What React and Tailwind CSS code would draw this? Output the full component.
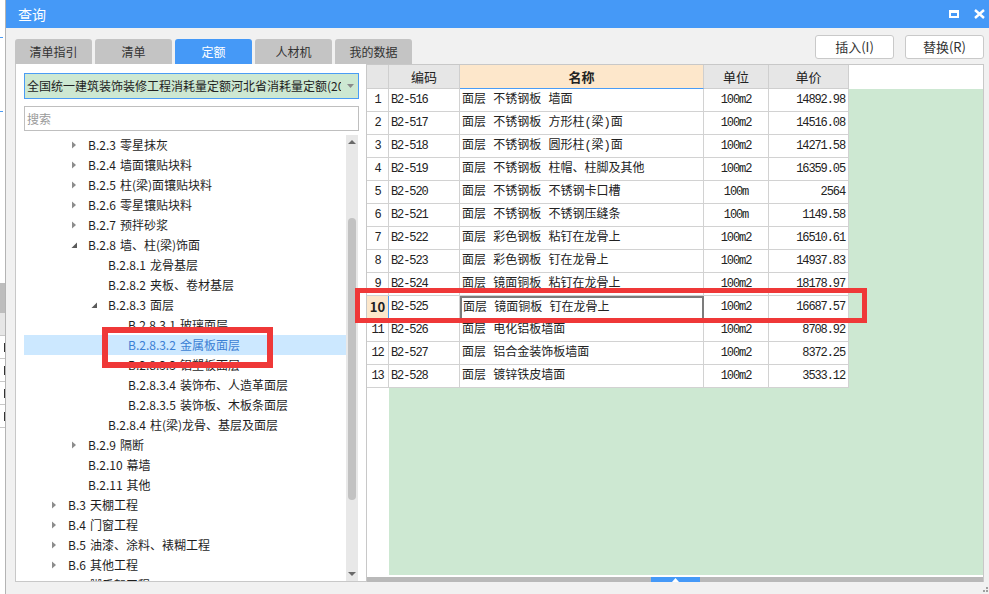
import { useState } from 'react'

const tabs = ['清单指引', '清单', '定额', '人材机', '我的数据']

const tree = [
  { l: 2, t: 'B.2.3 零星抹灰', a: 'r' },
  { l: 2, t: 'B.2.4 墙面镶贴块料', a: 'r' },
  { l: 2, t: 'B.2.5 柱(梁)面镶贴块料', a: 'r' },
  { l: 2, t: 'B.2.6 零星镶贴块料', a: 'r' },
  { l: 2, t: 'B.2.7 预拌砂浆', a: 'r' },
  { l: 2, t: 'B.2.8 墙、柱(梁)饰面', a: 'd' },
  { l: 3, t: 'B.2.8.1 龙骨基层' },
  { l: 3, t: 'B.2.8.2 夹板、卷材基层' },
  { l: 3, t: 'B.2.8.3 面层', a: 'd' },
  { l: 4, t: 'B.2.8.3.1 玻璃面层' },
  { l: 4, t: 'B.2.8.3.2 金属板面层', sel: true },
  { l: 4, t: 'B.2.8.3.3 铝塑板面层' },
  { l: 4, t: 'B.2.8.3.4 装饰布、人造革面层' },
  { l: 4, t: 'B.2.8.3.5 装饰板、木板条面层' },
  { l: 3, t: 'B.2.8.4 柱(梁)龙骨、基层及面层' },
  { l: 2, t: 'B.2.9 隔断', a: 'r' },
  { l: 2, t: 'B.2.10 幕墙' },
  { l: 2, t: 'B.2.11 其他' },
  { l: 1, t: 'B.3 天棚工程', a: 'r' },
  { l: 1, t: 'B.4 门窗工程', a: 'r' },
  { l: 1, t: 'B.5 油漆、涂料、裱糊工程', a: 'r' },
  { l: 1, t: 'B.6 其他工程', a: 'r' },
  { l: 1, t: 'B.7 脚手架工程', a: 'r' },
]

const rows = [
  ['B2-516', '面层 不锈钢板 墙面', '100m2', '14892.98'],
  ['B2-517', '面层 不锈钢板 方形柱(梁)面', '100m2', '14516.08'],
  ['B2-518', '面层 不锈钢板 圆形柱(梁)面', '100m2', '14271.58'],
  ['B2-519', '面层 不锈钢板 柱帽、柱脚及其他', '100m2', '16359.05'],
  ['B2-520', '面层 不锈钢板 不锈钢卡口槽', '100m', '2564'],
  ['B2-521', '面层 不锈钢板 不锈钢压缝条', '100m', '1149.58'],
  ['B2-522', '面层 彩色钢板 粘钉在龙骨上', '100m2', '16510.61'],
  ['B2-523', '面层 彩色钢板 钉在龙骨上', '100m2', '14937.83'],
  ['B2-524', '面层 镜面铜板 粘钉在龙骨上', '100m2', '18178.97'],
  ['B2-525', '面层 镜面铜板 钉在龙骨上', '100m2', '16687.57'],
  ['B2-526', '面层 电化铝板墙面', '100m2', '8708.92'],
  ['B2-527', '面层 铝合金装饰板墙面', '100m2', '8372.25'],
  ['B2-528', '面层 镀锌铁皮墙面', '100m2', '3533.12'],
]

const pad = ['pl-[0px]', 'pl-[0px]', 'pl-[20px]', 'pl-[40px]', 'pl-[60px]']

// tree expand / collapse arrows
const Arrow = ({ type }) => {
  if (type === 'r') {
    return (
      <svg width="6" height="8" viewBox="0 0 6 8" className="shrink-0">
        <path d="M1 0.5 L5 4 L1 7.5 Z" fill="#8c8c8c" />
      </svg>
    )
  }
  if (type === 'd') {
    return (
      <svg width="6" height="8" viewBox="0 0 6 8" className="shrink-0">
        <path d="M6 1.5 L6 7 L0.5 7 Z" fill="#5a5a5a" />
      </svg>
    )
  }
  return <span className="w-[6px] shrink-0" />
}

const App = () => {
  const [active] = useState(2)
  const mono = "font-['Liberation_Mono','Noto_Sans_CJK_SC',monospace]"
  const num = `text-[12px] tracking-[-1.1px] ${mono}`

  return (
    <div className="relative w-[989px] h-[594px] flex overflow-hidden bg-white font-['Noto_Sans_CJK_SC','Noto_Sans',sans-serif] text-[#222]">
      {/* window behind the dialog */}
      <div className="w-[5px] flex flex-col bg-white shrink-0">
        <div className="h-[37px]" />
        <div className="h-[1px] w-[3px] bg-[#4a9cf5]" />
        <div className="h-[73px]" />
        <div className="h-[1px] w-[3px] bg-[#4a9cf5]" />
        <div className="h-[171px]" />
        <div className="h-[30px] bg-[#bdbdbd]" />
        <div className="h-[23px] bg-[#e6e6e6] border-b border-[#c8c8c8]" />
        {[0, 1, 2, 3].map((i) => (
          <div key={i} className="h-[23px] border-b border-[#c8c8c8] flex justify-end items-center overflow-hidden">
            <div className="w-[2px] h-[9px] border-r-[1.5px] border-[#333]" />
          </div>
        ))}
      </div>

      {/* dialog */}
      <div className="flex-1 flex flex-col border-l border-[#b4b4b4] bg-[#f1f1f1]">
        {/* title bar */}
        <div className="h-[28px] bg-[#4599f7] flex items-center pl-[12px] pr-[4px] shrink-0">
          <span className="text-white text-[14px] leading-[28px]">查询</span>
          <div className="ml-auto flex items-center gap-[15px]">
            <div className="w-[10px] h-[8px] border-2 border-t-[3px] border-white" />
            <svg width="11" height="10" viewBox="0 0 11 10">
              <path d="M1 1 L10 9 M10 1 L1 9" stroke="white" strokeWidth="2.4" />
            </svg>
          </div>
        </div>

        {/* tabs + buttons */}
        <div className="h-[36px] flex pl-[9px] pr-[5px] shrink-0">
          <div className="flex items-end gap-[3px]">
            {tabs.map((t, i) => (
              <div
                key={t}
                className={`w-[77px] h-[25px] rounded-t-[3px] flex items-center justify-center text-[12px] leading-[25px] ${
                  i === active ? 'bg-[#4599f7] text-white' : 'bg-[#c4c4c4] text-[#333]'
                }`}
              >
                {t}
              </div>
            ))}
          </div>
          <div className="ml-auto flex gap-[11px] pt-[7px]">
            <button className="w-[79px] h-[24px] bg-white border border-[#c9c9c9] rounded-[3px] text-[13px] leading-[22px] text-[#333]">插入(I)</button>
            <button className="w-[79px] h-[24px] bg-white border border-[#c9c9c9] rounded-[3px] text-[13px] leading-[22px] text-[#333]">替换(R)</button>
          </div>
        </div>

        {/* main */}
        <div className="h-[518px] flex pl-[9px] pr-[5px] shrink-0">
          {/* left panel */}
          <div className="w-[351px] flex flex-col bg-white border-l border-b border-[#c8c8c8]">
            <div className="mt-[9px] ml-[8px] w-[335px] h-[26px] border border-[#4a9cf5] bg-[#cde8d2] flex items-center pl-[2px] pr-[4px] overflow-hidden">
              <span className="text-[12px] leading-[24px] whitespace-nowrap overflow-hidden flex-1">全国统一建筑装饰装修工程消耗量定额河北省消耗量定额(2018)</span>
              <svg width="7" height="4" viewBox="0 0 7 4" className="ml-[6px] shrink-0">
                <path d="M0 0 L7 0 L3.5 4 Z" fill="#8a8a8a" />
              </svg>
            </div>
            <div className="mt-[7px] ml-[8px] w-[335px] h-[25px] border border-[#bfbfbf] flex items-center pl-[2px]">
              <span className="text-[12px] leading-[23px] text-[#9a9a9a]">搜索</span>
            </div>

            {/* tree */}
            <div className="mt-[4px] flex-1 flex pl-[8px] min-h-0">
              <div className="w-[322px] flex flex-col overflow-hidden">
                {tree.map((n) => {
                  const sp = n.t.indexOf(' ')
                  return (
                    <div
                      key={n.t}
                      className={`h-[20px] shrink-0 flex items-center ${n.sel ? 'bg-[#cce8ff]' : ''}`}
                    >
                      <div className={`flex items-center ${pad[n.l]}`}>
                        <span className="w-[27px] shrink-0" />
                        <Arrow type={n.a} />
                        <span className="w-[11px] shrink-0" />
                        <span className={`flex gap-[4px] text-[12px] leading-[20px] whitespace-nowrap ${n.sel ? 'text-[#3b7fd4]' : 'text-[#1e1e1e]'}`}>
                          <span>{n.t.slice(0, sp)}</span>
                          <span>{n.t.slice(sp + 1)}</span>
                        </span>
                      </div>
                    </div>
                  )
                })}
              </div>
              {/* vertical scrollbar */}
              <div className="w-[12px] bg-[#e8e8e8] flex flex-col items-center">
                <div className="h-[14px] flex items-center justify-center shrink-0">
                  <svg width="8" height="4" viewBox="0 0 8 4">
                    <path d="M0 4 L8 4 L4 0 Z" fill="#6a6a6a" />
                  </svg>
                </div>
                <div className="h-[69px] shrink-0" />
                <div className="w-[8px] h-[282px] rounded-full bg-[#c2c2c2] shrink-0" />
                <div className="flex-1" />
                <div className="h-[14px] flex items-center justify-center shrink-0">
                  <svg width="8" height="4" viewBox="0 0 8 4">
                    <path d="M0 0 L8 0 L4 4 Z" fill="#6a6a6a" />
                  </svg>
                </div>
              </div>
              <div className="w-[8px]" />
            </div>
          </div>

          {/* grid */}
          <div className="w-[618px] flex flex-col bg-white border-l border-t border-r border-[#c8c8c8]">
            {/* header */}
            <div className="h-[24px] flex shrink-0">
              <div className="w-[22px] bg-[#e6e6e6] border-r border-b border-[#cfcfcf]" />
              <div className="w-[71px] bg-[#e6e6e6] border-r border-b border-[#cfcfcf] flex items-center justify-center text-[13px] leading-[23px]">编码</div>
              <div className="w-[244px] bg-[#fde7cb] border-r border-[#cfcfcf] border-b border-b-[#4a9cf5] flex items-center justify-center text-[13px] font-bold leading-[23px]">名称</div>
              <div className="w-[65px] bg-[#e6e6e6] border-r border-b border-[#cfcfcf] flex items-center justify-center text-[13px] leading-[23px]">单位</div>
              <div className="w-[80px] bg-[#e6e6e6] border-r border-b border-[#cfcfcf] flex items-center justify-center text-[13px] leading-[23px]">单价</div>
            </div>

            {/* body */}
            <div className="h-[486px] flex shrink-0">
              <div className="w-[22px] flex flex-col bg-white">
                {rows.map((r, i) => (
                  <div
                    key={r[0]}
                    className={`h-[23px] shrink-0 border-b border-[#d2d2d2] flex items-center justify-center ${
                      i === 9
                        ? 'bg-[#fde7cb] border-r border-r-[#4a9cf5] font-bold text-[13px]'
                        : `border-r border-r-[#d2d2d2] ${num}`
                    }`}
                  >
                    {i + 1}
                  </div>
                ))}
              </div>
              <div className="flex-1 flex flex-col bg-[#cde8d2]">
                {rows.map((r, i) => (
                  <div key={r[0]} className="h-[23px] flex shrink-0">
                    <div className={`w-[71px] bg-white border-r border-b border-[#d2d2d2] pl-[2px] flex items-center ${num}`}>{r[0]}</div>
                    <div
                      className={`w-[244px] bg-white border-b flex items-center text-[12px] whitespace-nowrap ${mono} ${
                        i === 9 ? 'border-2 border-[#7c7c7c] pl-[1px]' : 'border-r border-[#d2d2d2] pl-[2px]'
                      }`}
                    >
                      {r[1]}
                    </div>
                    <div className={`w-[65px] bg-white border-r border-b border-[#d2d2d2] flex items-center justify-center ${num}`}>{r[2]}</div>
                    <div className={`w-[80px] bg-white border-r border-b border-[#d2d2d2] flex items-center justify-end pr-[3px] ${num}`}>{r[3]}</div>
                  </div>
                ))}
              </div>
            </div>

            <div className="h-[2px] bg-white shrink-0" />
            {/* bottom splitter bar */}
            <div className="h-[5px] bg-[#b9b9b9] flex shrink-0">
              <div className="w-[284px]" />
              <div className="w-[49px] bg-[#4599f7] flex items-center justify-center">
                <svg width="7" height="4" viewBox="0 0 7 4">
                  <path d="M0 4 L7 4 L3.5 0 Z" fill="white" />
                </svg>
              </div>
            </div>
          </div>
        </div>

        {/* bottom strip with resize grip */}
        <div className="flex-1 flex justify-end items-end pr-[1px] pb-[2px]">
          <div className="grid grid-cols-2 gap-[1px]">
            <span className="w-[2px] h-[2px]" />
            <span className="w-[2px] h-[2px] bg-[#a0a0a0]" />
            <span className="w-[2px] h-[2px] bg-[#a0a0a0]" />
            <span className="w-[2px] h-[2px] bg-[#a0a0a0]" />
          </div>
        </div>
      </div>

      {/* red highlight marks */}
      <div className="absolute left-[102px] top-[327px] w-[171px] h-[41px] border-[6px] border-[#ef3838]" />
      <div className="absolute left-[355px] top-[288px] w-[512px] h-[35px] border-[5px] border-[#ef3838]" />
    </div>
  )
}

export default App
